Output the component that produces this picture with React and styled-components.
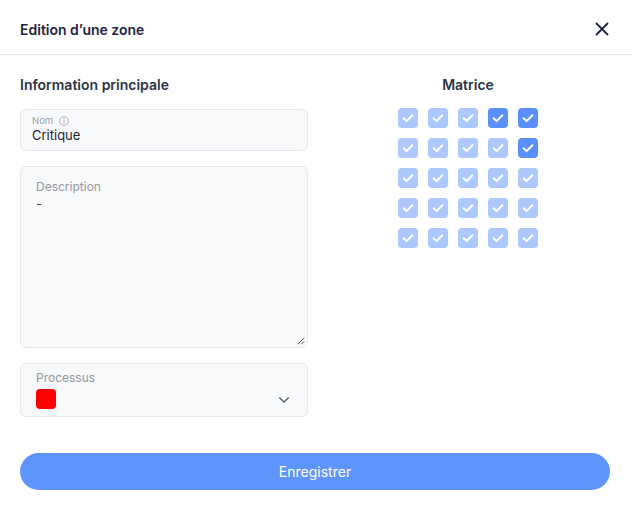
import React from 'react'
import styled, { createGlobalStyle } from 'styled-components'

const GlobalStyle = createGlobalStyle`
  * { box-sizing: border-box; }
  body {
    margin: 0;
    background: #fff;
    font-family: Inter, "Noto Sans", sans-serif;
  }
`

const Modal = styled.div`
  width: 632px;
  height: 510px;
  background: #fff;
`

const Header = styled.header`
  height: 55px;
  padding: 4px 20px 0;
  display: flex;
  align-items: center;
  justify-content: space-between;
  border-bottom: 1px solid #e6e8ec;
`

const Title = styled.h1`
  margin: 0;
  font-size: 14px;
  font-weight: 600;
  color: #1e2540;
`

const CloseButton = styled.button`
  border: 0;
  background: none;
  padding: 0;
  width: 16px;
  height: 16px;
  display: flex;
  color: #1e2540;
  margin-right: 2px;
`

const Body = styled.div`
  padding: 20px 20px 0;
`

const Columns = styled.div`
  display: grid;
  grid-template-columns: 288px 1fr;
  gap: 16px;
`

const Column = styled.section`
  display: flex;
  flex-direction: column;
  align-items: ${(p) => (p.center ? 'center' : 'stretch')};
`

const SectionTitle = styled.h2`
  margin: 0 0 14px;
  font-size: 14px;
  line-height: 20px;
  font-weight: 600;
  color: #2b3445;
`

const Field = styled.div`
  background: #f8f9fb;
  border: 1px solid #e4e7eb;
  border-radius: 6px;
  padding: ${(p) => p.pad || '12px 15px'};
  height: ${(p) => p.h}px;
  margin-bottom: 15px;
  position: relative;
`

const SmallLabel = styled.div`
  display: flex;
  align-items: center;
  gap: 6px;
  font-size: 9.5px;
  line-height: 12px;
  color: #9a9ea6;
`

const Value = styled.div`
  font-size: 13px;
  line-height: 17px;
  color: #1f2430;
`

const Label = styled.div`
  font-size: 12px;
  line-height: 16px;
  color: #94989f;
`

const Dash = styled.div`
  font-size: 13px;
  line-height: 18px;
  color: #3a3f4a;
`

const Grip = styled.svg`
  position: absolute;
  right: 2px;
  bottom: 2px;
`

const SelectRow = styled.div`
  display: flex;
  align-items: center;
  justify-content: space-between;
  margin-top: 3px;
`

const Swatch = styled.span`
  width: 20px;
  height: 20px;
  border-radius: 4px;
  background: ${(p) => p.color};
`

const Chevron = styled.svg`
  margin-right: 2px;
  margin-top: 1px;
`

const Grid = styled.div`
  display: grid;
  grid-template-columns: repeat(5, 20px);
  gap: 10px;
  margin-top: -1px;
`

const Cell = styled.span`
  width: 20px;
  height: 20px;
  border-radius: 4px;
  display: flex;
  align-items: center;
  justify-content: center;
  background: ${(p) => (p.on ? '#5b90fb' : '#adc8fd')};
`

const SaveButton = styled.button`
  display: block;
  width: 590px;
  height: 37px;
  margin-top: 21px;
  border: 0;
  border-radius: 19px;
  background: #5e95fc;
  color: #fff;
  font-family: inherit;
  font-size: 14px;
  font-weight: 400;
`

// cells drawn in the strong colour
const active = new Set(['0-3', '0-4', '1-4'])

const Check = () => (
  <svg width="14" height="14" viewBox="0 0 14 14" fill="none">
    <path d="M2.6 7.3l3 2.8 5.8-5.9" stroke="#fff" strokeWidth="2" strokeLinecap="round" strokeLinejoin="round" />
  </svg>
)

const App = () => {
  return (
    <Modal>
      <GlobalStyle />
      <Header>
        <Title>Edition d’une zone</Title>
        <CloseButton aria-label="Fermer">
          <svg width="16" height="16" viewBox="0 0 16 16" fill="none">
            <path d="M2.5 2.5l11 11M13.5 2.5l-11 11" stroke="currentColor" strokeWidth="1.8" strokeLinecap="round" />
          </svg>
        </CloseButton>
      </Header>

      <Body>
        <Columns>
          <Column>
            <SectionTitle>Information principale</SectionTitle>

            <Field h={42} pad="5px 11px">
              <SmallLabel>
                Nom
                <svg width="10" height="10" viewBox="0 0 10 10" fill="none">
                  <circle cx="5" cy="5" r="4.3" stroke="#9a9ea6" strokeWidth="0.9" />
                  <path d="M5 4.4v2.8" stroke="#9a9ea6" strokeWidth="0.9" strokeLinecap="round" />
                  <circle cx="5" cy="2.9" r="0.55" fill="#9a9ea6" />
                </svg>
              </SmallLabel>
              <Value>Critique</Value>
            </Field>

            <Field h={182}>
              <Label>Description</Label>
              <Dash>-</Dash>
              <Grip width="9" height="9" viewBox="0 0 9 9">
                <path d="M8 2L2 8M8 5.5L5.5 8" stroke="#555" strokeWidth="1" strokeLinecap="round" />
              </Grip>
            </Field>

            <Field h={54} pad="6px 15px">
              <Label>Processus</Label>
              <SelectRow>
                <Swatch color="#ff0000" />
                <Chevron width="12" height="8" viewBox="0 0 12 8" fill="none">
                  <path d="M1.5 1.8L6 6l4.5-4.2" stroke="#4b5160" strokeWidth="1.2" strokeLinecap="round" strokeLinejoin="round" />
                </Chevron>
              </SelectRow>
            </Field>
          </Column>

          <Column center>
            <SectionTitle>Matrice</SectionTitle>
            <Grid>
              {[0, 1, 2, 3, 4].map((r) =>
                [0, 1, 2, 3, 4].map((c) => (
                  <Cell key={`${r}-${c}`} on={active.has(`${r}-${c}`) ? 1 : 0}>
                    <Check />
                  </Cell>
                ))
              )}
            </Grid>
          </Column>
        </Columns>

        <SaveButton>Enregistrer</SaveButton>
      </Body>
    </Modal>
  )
}

export default App
